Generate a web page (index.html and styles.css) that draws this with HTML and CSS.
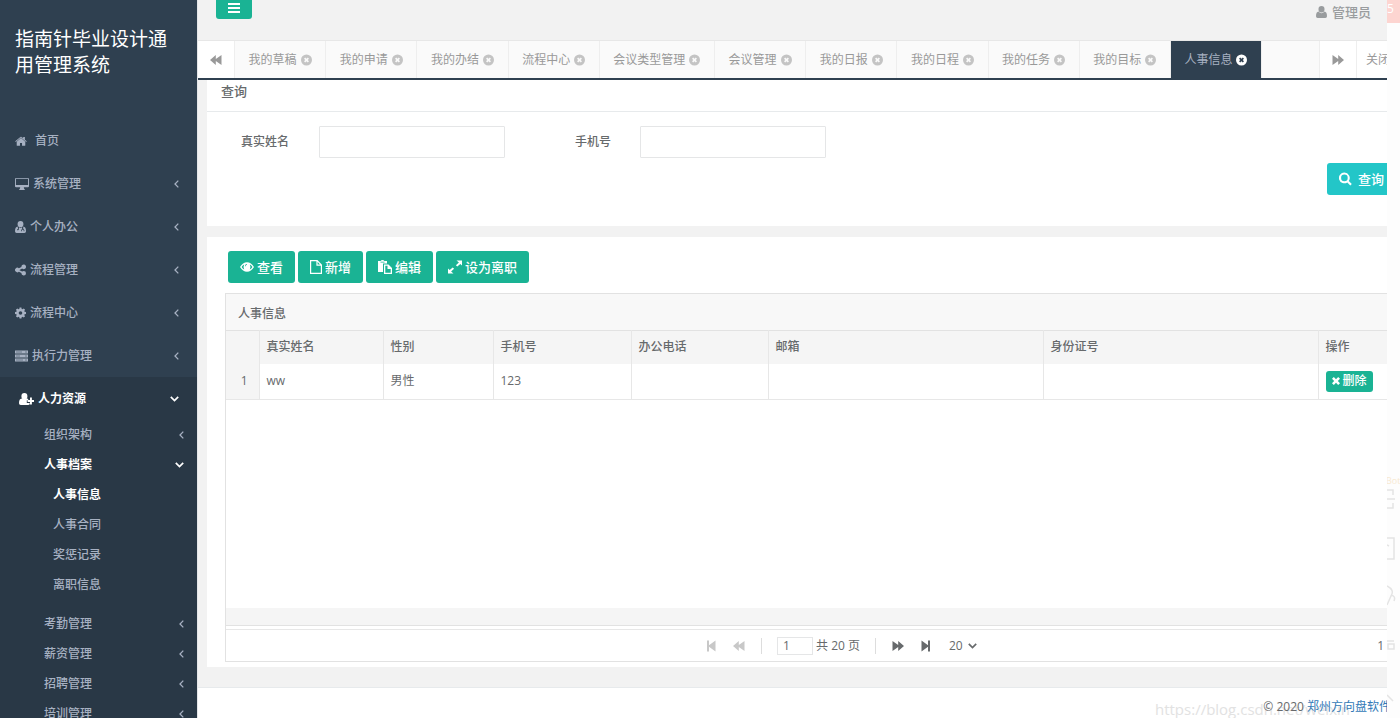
FILE: index.html
```html
<!DOCTYPE html>
<html lang="zh-CN">
<head>
<meta charset="utf-8">
<title>人事信息</title>
<link rel="stylesheet" href="styles.css">
</head>
<body>
<svg class="defs" aria-hidden="true">
  <symbol id="home" viewBox="0 0 14 12"><path d="M7 2.6 12 6.8V11q0 .6-.6.6H8.2V8.2H5.8v3.4H2.6Q2 11.600 2 11V6.800zM.3 6.300 6.300 1.200q.7-.5 1.400 0l1.900 1.600V1.400h1.900v3L13.700 6.300l-.6.800L7 2 .9 7.100z"/></symbol>
  <symbol id="desktop" viewBox="0 0 15 13"><path fill-rule="evenodd" d="M1.200 0h12.600Q15 0 15 1.200v7.600q0 1.200-1.200 1.200H9.400l.6 2q.8.2.8.600v.4H4.200v-.4q0-.4.8-.600l.6-2H1.200Q0 10 0 8.800V1.200Q0 0 1.200 0zM1 1v6.600h13V1z"/></symbol>
  <symbol id="user" viewBox="0 0 12 13"><path d="M6 0a3.300 3.500 0 0 1 0 7A3.300 3.500 0 0 1 6 0zM2.800 6q1.300 1.800 3.200 1.800T9.200 6Q12 6.400 12 11q0 2-1.800 2H1.800Q0 13 0 11q0-4.600 2.800-5z"/></symbol>
  <symbol id="usermd" viewBox="0 0 12 13"><path fill-rule="evenodd" d="M6 0a3.200 3.400 0 0 1 0 6.800A3.200 3.400 0 0 1 6 0zM3 6l.3 2.300-1.100.9.800 1 1.100-.7L4.300 7q1.700 1 3.400 0l.1 1.500-1 1.300v1.400h.8V10l.9-.8.900.8v1.200h.8V9.800L9 8.500 9 6q3 .4 3 5 0 2-1.800 2H1.800Q0 13 0 11q0-4.600 3-5z"/></symbol>
  <symbol id="share" viewBox="0 0 12 12"><path d="M9.500 7a2.500 2.500 0 1 1-2.500 2.300L4.200 7.900a2.500 2.500 0 1 1 0-3.800L7 2.700a2.500 2.500 0 1 1 .8 1.700L4.900 5.900v.3l2.900 1.500Q8.500 7 9.500 7z"/></symbol>
  <symbol id="cog" viewBox="0 0 12 12"><path fill-rule="evenodd" d="M5 0h2l.3 1.500.9.400L9.500 1 11 2.500l-.9 1.300.4.900L12 5v2l-1.500.3-.4.900.9 1.300L9.500 11l-1.300-.9-.9.400L7 12H5l-.3-1.500-.9-.4-1.300.9L1 9.500l.9-1.300-.4-.9L0 7V5l1.500-.3.400-.9L1 2.500 2.500 1l1.300.9.900-.4zM6 4a2 2 0 1 0 0 4 2 2 0 0 0 0-4z"/></symbol>
  <symbol id="server" viewBox="0 0 13 11"><path fill-rule="evenodd" d="M0 0h13v3H0zm0 4h13v3H0zm0 4h13v3H0zM1 1.200v.6h6v-.6zm9 0v.6h2v-.6zM1 5.200v.6h4v-.6zm9 0v.6h2v-.6zM1 9.200v.6h7v-.6zm9 0v.6h2v-.6z"/></symbol>
  <symbol id="useradd" viewBox="0 0 15 12"><path d="M5.400 0a3 3.200 0 0 1 0 6.400A3 3.200 0 0 1 5.400 0zM2.600 5.500q2.800 2 5.600 0 .6.100 1 .5v1.200H7.800v2.700h2.900v1.400q-.5.700-1.500.7H1.700Q0 12 0 10.200q0-4.300 2.600-4.700zM11 4.600h1.900v2.500H15v2h-2.100v2.500H11V9.100H8.600v-2H11z"/></symbol>
  <symbol id="left" viewBox="0 0 5 8"><path d="M4.300.6 1 4l3.300 3.400" fill="none" stroke="currentColor" stroke-width="1.300"/></symbol>
  <symbol id="down" viewBox="0 0 9 6"><path d="M.8.900 4.500 4.600 8.200.9" fill="none" stroke="currentColor" stroke-width="1.700"/></symbol>
  <symbol id="bars" viewBox="0 0 12 10"><path d="M0 0h12v2H0zm0 4h12v2H0zm0 4h12v2H0z"/></symbol>
  <symbol id="back" viewBox="0 0 12 10"><path d="M5.800 0v4L11.500 0v10L5.800 6v4L0 5z"/></symbol>
  <symbol id="forward" viewBox="0 0 12 10"><path d="M6.200 0v4L.5 0v10l5.700-4v4L12 5z"/></symbol>
  <symbol id="first" viewBox="0 0 9 11"><path d="M0 0h2v4.800L8.500 0v11L2 6.200V11H0z"/></symbol>
  <symbol id="last" viewBox="0 0 9 11"><path d="M9 0H7v4.800L.5 0v11L7 6.200V11h2z"/></symbol>
  <symbol id="close" viewBox="0 0 12 12"><path fill-rule="evenodd" d="M6 0a6 6 0 1 1 0 12A6 6 0 0 1 6 0zM3.300 4.600 4.700 6 3.300 7.400l1.300 1.300L6 7.300l1.400 1.400 1.300-1.300L7.300 6l1.400-1.400-1.300-1.300L6 4.700 4.600 3.300z"/></symbol>
  <symbol id="search" viewBox="0 0 13 13"><path fill-rule="evenodd" d="M5.400 0a5.400 5.400 0 0 1 4.400 8.400l3 3-1.500 1.500-3-3A5.400 5.400 0 1 1 5.400 0zm0 2.100a3.300 3.300 0 1 0 0 6.600 3.300 3.300 0 0 0 0-6.600z"/></symbol>
  <symbol id="eye" viewBox="0 0 14 10"><path fill-rule="evenodd" d="M0 5Q2.800.3 7 .3T14 5Q11.200 9.700 7 9.700T0 5zm1.600 0q1 1.700 2.600 2.600Q2.800 5 4.200 2.400 2.600 3.300 1.600 5zm10.800 0q-1-1.700-2.600-2.600Q11.200 5 9.800 7.600 11.400 6.700 12.400 5zM7 2Q5 2 5 4.200l.7.100Q5.700 2.700 7 2.700z"/></symbol>
  <symbol id="file" viewBox="0 0 12 14"><path d="M1 .6h6.200L11.400 5v8.400H.6V.6zM7 .6v4.600h4.400" fill="none" stroke="currentColor" stroke-width="1.200"/></symbol>
  <symbol id="paste" viewBox="0 0 14 14"><path fill-rule="evenodd" d="M0 1h2.700Q3 0 4.500 0t1.800 1H9v2.500H5V12H0zm2.500.8v.8h4v-.8zM6 4.500h4.500L14 8v6H6zm1.300 1.300v6.900h5.400V9H9.500V5.800z"/></symbol>
  <symbol id="expand" viewBox="0 0 14 13"><path d="M8.500 0H14v5l-1.700-1.600-3 2.700-1.400-1.300 3-2.800zM5.500 13H0V8l1.700 1.600 3-2.700 1.400 1.300-3 2.800z"/></symbol>
  <symbol id="times" viewBox="0 0 10 10"><path d="M2.300 0 5 2.700 7.700 0 10 2.300 7.300 5 10 7.700 7.700 10 5 7.300 2.300 10 0 7.700 2.700 5 0 2.300z"/></symbol>
</svg>

<nav class="sidebar">
  <h1 class="brand">指南针毕业设计通用管理系统</h1>
  <ul class="menu">
    <li><a class="item home" href="#"><svg class="i12"><use href="#home"/></svg>首页</a></li>
    <li><a class="item" href="#"><svg class="i14"><use href="#desktop"/></svg>系统管理<svg class="arrow"><use href="#left"/></svg></a></li>
    <li><a class="item" href="#"><svg class="i11"><use href="#usermd"/></svg>个人办公<svg class="arrow"><use href="#left"/></svg></a></li>
    <li><a class="item" href="#"><svg class="i11"><use href="#share"/></svg>流程管理<svg class="arrow"><use href="#left"/></svg></a></li>
    <li><a class="item" href="#"><svg class="i11"><use href="#cog"/></svg>流程中心<svg class="arrow"><use href="#left"/></svg></a></li>
    <li><a class="item" href="#"><svg class="i13"><use href="#server"/></svg>执行力管理<svg class="arrow"><use href="#left"/></svg></a></li>
    <li class="open">
      <a class="item current" href="#"><svg class="i15"><use href="#useradd"/></svg>人力资源<svg class="arrow wide"><use href="#down"/></svg></a>
      <ul class="sub">
        <li><a href="#">组织架构<svg class="arrow"><use href="#left"/></svg></a></li>
        <li><a class="current" href="#">人事档案<svg class="arrow wide"><use href="#down"/></svg></a>
          <ul class="leaf">
            <li><a class="current" href="#">人事信息</a></li>
            <li><a href="#">人事合同</a></li>
            <li><a href="#">奖惩记录</a></li>
            <li><a href="#">离职信息</a></li>
          </ul>
        </li>
        <li><a href="#">考勤管理<svg class="arrow"><use href="#left"/></svg></a></li>
        <li><a href="#">薪资管理<svg class="arrow"><use href="#left"/></svg></a></li>
        <li><a href="#">招聘管理<svg class="arrow"><use href="#left"/></svg></a></li>
        <li><a href="#">培训管理<svg class="arrow"><use href="#left"/></svg></a></li>
      </ul>
    </li>
  </ul>
</nav>

<main class="app">
  <header class="topbar">
    <button class="toggle" type="button" aria-label="菜单"><svg class="i12"><use href="#bars"/></svg></button>
    <a class="account" href="#"><svg class="i11"><use href="#user"/></svg>管理员</a>
  </header>
  <div class="tabbar">
    <button class="roll" type="button" aria-label="向左"><svg class="i12"><use href="#back"/></svg></button>
    <div class="tabs">
      <a class="tab" href="#">我的草稿<svg class="i11"><use href="#close"/></svg></a>
      <a class="tab" href="#">我的申请<svg class="i11"><use href="#close"/></svg></a>
      <a class="tab" href="#">我的办结<svg class="i11"><use href="#close"/></svg></a>
      <a class="tab" href="#">流程中心<svg class="i11"><use href="#close"/></svg></a>
      <a class="tab" href="#">会议类型管理<svg class="i11"><use href="#close"/></svg></a>
      <a class="tab" href="#">会议管理<svg class="i11"><use href="#close"/></svg></a>
      <a class="tab" href="#">我的日报<svg class="i11"><use href="#close"/></svg></a>
      <a class="tab" href="#">我的日程<svg class="i11"><use href="#close"/></svg></a>
      <a class="tab" href="#">我的任务<svg class="i11"><use href="#close"/></svg></a>
      <a class="tab" href="#">我的目标<svg class="i11"><use href="#close"/></svg></a>
      <a class="tab active" href="#">人事信息<svg class="i11"><use href="#close"/></svg></a>
    </div>
    <button class="roll" type="button" aria-label="向右"><svg class="i12"><use href="#forward"/></svg></button>
    <button class="closer" type="button">关闭操作</button>
  </div>

  <section class="panel query">
    <h2>查询</h2>
    <form class="fields">
      <label class="name" for="name">真实姓名</label><input id="name" type="text">
      <label class="phone" for="phone">手机号</label><input id="phone" type="text">
    </form>
    <div class="submit"><button class="btn info" type="button"><svg class="i13"><use href="#search"/></svg>查询</button></div>
  </section>

  <section class="panel data">
    <div class="tools">
      <button class="btn" type="button"><svg class="i14"><use href="#eye"/></svg>查看</button>
      <button class="btn" type="button"><svg class="i12"><use href="#file"/></svg>新增</button>
      <button class="btn" type="button"><svg class="i14"><use href="#paste"/></svg>编辑</button>
      <button class="btn" type="button"><svg class="i14"><use href="#expand"/></svg>设为离职</button>
    </div>
    <div class="grid">
      <h3>人事信息</h3>
      <div class="rows">
        <table>
          <colgroup><col class="c-no"><col class="c-name"><col class="c-sex"><col class="c-tel"><col class="c-office"><col class="c-mail"><col class="c-mail"><col></colgroup>
          <thead><tr><th></th><th>真实姓名</th><th>性别</th><th>手机号</th><th>办公电话</th><th>邮箱</th><th>身份证号</th><th>操作</th></tr></thead>
          <tbody><tr><td class="no">1</td><td>ww</td><td>男性</td><td>123</td><td></td><td></td><td></td><td><button class="mini" type="button"><svg class="i8"><use href="#times"/></svg>删除</button></td></tr></tbody>
        </table>
      </div>
      <div class="track"></div>
      <div class="pager">
        <div class="pages">
          <button class="off" type="button" aria-label="首页"><svg class="i9"><use href="#first"/></svg></button>
          <button class="off" type="button" aria-label="上一页"><svg class="i12"><use href="#back"/></svg></button>
          <span class="bar"></span>
          <label class="goto"><input type="text" value="1">共 20 页</label>
          <span class="bar"></span>
          <button type="button" aria-label="下一页"><svg class="i12"><use href="#forward"/></svg></button>
          <button type="button" aria-label="末页"><svg class="i9"><use href="#last"/></svg></button>
          <span class="size"><select aria-label="每页条数"><option>20</option></select><svg class="i9"><use href="#down"/></svg></span>
        </div>
        <span class="range">1 - 1</span>
      </div>
    </div>
  </section>
  <footer class="footer"><span>© 2020 <a href="#">郑州方向盘软件</a></span></footer>
</main>

<aside class="edge">
  <span class="badge">5</span>
  <span class="bot">Bot</span>
  <svg class="glyphs" viewBox="0 0 13 220"><path d="M0 2h6v5M0 11h8M6 15v5H0M0 50h7v21H0M0 57l2 1M0 98q8 4 4 10l-4 9M4 107q5 1 3 6M0 175M0 153h7M1 156h6v5H1zM0 207l6 6"/></svg>
</aside>
<div class="watermark">https://blog.csdn.net/weixin</div>
</body>
</html>
```
FILE: styles.css
```css
* { box-sizing: border-box; }
body {
  margin: 0;
  height: 100vh;
  display: flex;
  overflow: hidden;
  position: relative;
  background: #fdfdfd;
  color: #676a6c;
  font: 12px/20px "Open Sans", "Noto Sans CJK SC", sans-serif;
}
ul { list-style: none; margin: 0; padding: 0; }
h1, h2, h3 { margin: 0; font-weight: 500; }
a { color: inherit; text-decoration: none; }
button, input, select { font: inherit; color: inherit; }
button { border: 0; padding: 0; background: none; }
svg { fill: currentColor; flex: none; height: 14px; }
.defs { position: absolute; width: 0; height: 0; }
.i8 { width: 8px; height: 10px; }
.i9 { width: 9px; }
.i11 { width: 11px; }
.i12 { width: 12px; }
.i13 { width: 13px; }
.i14 { width: 14px; }
.i15 { width: 15px; }

.sidebar {
  flex: none;
  width: 197px;
  overflow: hidden;
  background: #2f4050;
  color: #a7b1c2;
  font-weight: 500;
}
.brand {
  padding: 26px 30px 41px 15px;
  font-size: 19px;
  line-height: 26px;
  font-weight: 400;
  color: #fff;
}
.item { display: flex; align-items: center; gap: 4px; height: 43px; padding: 0 18px 0 15px; }
.home { gap: 8px; }
.arrow { width: 5px; height: 8px; margin-left: auto; }
.wide { width: 9px; }
.open { background: #293846; }
.open .item { padding-left: 19px; }
.current { color: #fff; font-weight: 700; }
.sub a { display: flex; align-items: center; height: 30px; padding: 0 13px 0 44px; }
.leaf { padding-bottom: 9px; }
.sub .leaf a { padding-left: 53px; }

.app {
  flex: 1;
  min-width: 0;
  overflow: hidden;
  display: flex;
  flex-direction: column;
  background: #f2f2f2;
  border-left: 1px solid #e4e6e8;
}
.topbar { flex: none; display: flex; justify-content: space-between; align-items: flex-start; height: 40px; padding: 0 16px 0 18px; }
.toggle { display: flex; justify-content: center; width: 36px; height: 19px; padding-top: 1px; border-radius: 0 0 3px 3px; background: #1ab394; color: #fff; }
.account { display: flex; align-items: center; gap: 5px; height: 24px; font-size: 13px; font-weight: 500; color: #999c9e; }
.tabbar { flex: none; display: flex; height: 40px; border-top: 1px solid #e7e7e7; border-bottom: 2px solid #2f4050; background: #fafafa; color: #999; }
.roll { display: flex; align-items: center; justify-content: center; flex: none; width: 37px; background: #fff; border-right: 1px solid #eee; }
.tabs { flex: 1; min-width: 0; display: flex; padding-right: 57px; border-right: 1px solid #eee; }
.tab { flex: 1 0 auto; display: flex; align-items: center; justify-content: center; gap: 4px; border-right: 1px solid #eee; }
.tab svg { color: #c4c4c4; }
.active { background: #2f4050; color: #a7b1c2; }
.tab.active svg { color: #fff; }
.closer { flex: none; width: 30px; padding-left: 9px; overflow: hidden; white-space: nowrap; text-align: left; background: #fff; }

.panel { margin-left: 9px; background: #fff; }
.query { flex: none; height: 146px; margin-bottom: 11px; }
.query h2 { height: 32px; padding-left: 14px; line-height: 22px; font-size: 13px; border-bottom: 1px solid #e7eaec; }
.fields { display: flex; align-items: center; padding: 14px 0 0 34px; font-weight: 500; }
.fields input { width: 186px; height: 32px; padding: 6px 12px; border: 1px solid #e5e6e7; border-radius: 1px; background: #fff; }
.name { width: 78px; }
.phone { width: 65px; margin-left: 70px; }
.submit { display: flex; justify-content: flex-end; margin: 5px -9px 0 0; }
.btn { display: flex; align-items: center; gap: 3px; height: 32px; padding: 0 12px; border-radius: 3px; background: #1ab394; color: #fff; font-size: 13px; font-weight: 500; }
.info { gap: 6px; background: #23c6c8; }

.data { flex: 1; min-height: 0; display: flex; flex-direction: column; padding: 14px 0 5px 18px; margin-bottom: 20px; }
.tools { display: flex; gap: 3px; padding-left: 3px; margin-bottom: 10px; }
.grid { flex: 1; min-height: 0; display: flex; flex-direction: column; border: 1px solid #e2e2e2; border-right: 0; }
.grid h3 { height: 36px; padding-left: 12px; font-size: 12px; line-height: 40px; background: #f8f8f8; }
.rows { flex: 1; min-height: 0; overflow: hidden; }
table { width: 100%; table-layout: fixed; border-collapse: collapse; border-top: 1px solid #e2e2e2; border-bottom: 1px solid #e7e7e7; }
.c-no { width: 33px; }
.c-name { width: 124px; }
.c-sex { width: 110px; }
.c-tel { width: 138px; }
.c-office { width: 137px; }
.c-mail { width: 275px; }
th, td { padding: 0 7px; text-align: left; border-left: 1px solid #e7e7e7; }
th:first-child, td:first-child { border-left: 0; }
th { height: 33px; font-weight: 500; background: #f5f5f5; }
td { height: 36px; }
.no { background: #f5f5f5; text-align: right; padding-right: 11px; }
.mini { display: flex; align-items: center; gap: 3px; height: 21px; padding: 0 6px; border-radius: 3px; background: #1ab394; color: #fff; font-weight: 500; }
.track { height: 18px; background: #f5f5f5; border-bottom: 1px solid #e2e2e2; }
.pager { display: flex; align-items: center; justify-content: center; position: relative; height: 32px; margin-top: 3px; border-top: 1px solid #e7e7e7; }
.pages { display: flex; align-items: center; gap: 15px; margin-left: 70px; }
.pages button { display: flex; padding: 0 1px; }
.pages .off { color: #c8c8c8; }
.bar { width: 1px; height: 16px; background: #ddd; }
.goto { display: flex; align-items: center; gap: 3px; }
.goto input { width: 36px; height: 18px; padding: 0 5px; border: 1px solid #e5e6e7; }
.size { display: flex; align-items: center; gap: 5px; padding-left: 3px; }
.size select { appearance: none; width: 14px; padding: 0; border: 0; background: none; }
.range { position: absolute; right: -14px; }
.footer { flex: none; display: flex; justify-content: flex-end; height: 31px; padding-top: 9px; border-top: 1px solid #e7eaec; background: #fff; }
.footer span { margin-right: -4px; white-space: nowrap; position: relative; z-index: 2; }
.footer a { color: #337ab7; }

.edge { flex: none; width: 13px; overflow: hidden; position: relative; }
.badge { display: block; height: 23px; line-height: 18px; background: #fdd5d1; color: #fff; }
.bot { position: absolute; top: 471px; left: -1px; font-size: 9px; color: #f8ead2; }
.glyphs { position: absolute; top: 488px; left: 0; width: 13px; height: 220px; fill: none; stroke: #e4e4e4; stroke-width: 1.500; }
.watermark { position: absolute; right: 50px; bottom: -3px; z-index: 1; font-size: 15px; line-height: 24px; color: #e2e2e2; }
```
